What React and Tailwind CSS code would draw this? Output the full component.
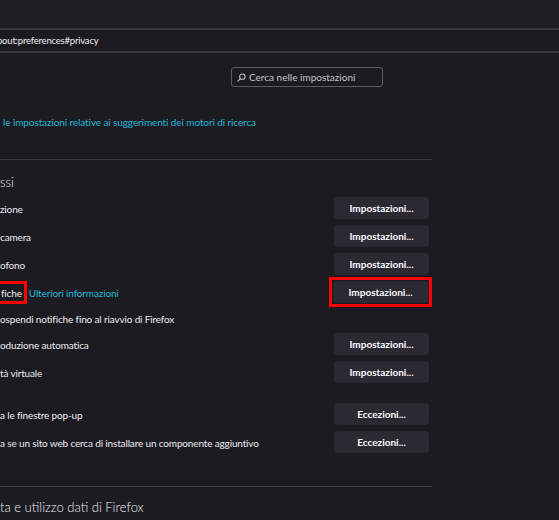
import React from 'react';

const SearchIcon = () => (
  <svg width="9" height="9" viewBox="0 0 16 16" fill="none" stroke="#c8c8cf" strokeWidth="1.8">
    <circle cx="9.5" cy="6.5" r="4.8" />
    <path d="M6.2 9.8 1.5 14.5" strokeLinecap="round" />
  </svg>
);

const PrefButton = ({ label }) => (
  <button className="w-[95px] h-[22px] rounded-[4px] bg-[#2b2a33] text-[10px] font-bold text-[#fbfbfe] flex items-center justify-center">
    {label}
  </button>
);

const Row = ({ children, button, className = 'h-[28px]' }) => (
  <div className={`flex items-center justify-between pr-[3px] ${className}`}>
    <div className="flex items-center pt-[2px] text-[10px] tracking-[-0.15px] text-[#ececf0]">{children}</div>
    {button && <PrefButton label={button} />}
  </div>
);

const App = () => {
  return (
    <div
      className="w-[559px] h-[520px] overflow-hidden bg-[#1c1b22] text-[#fbfbfe]"
      style={{ fontFamily: 'Lato, "Noto Sans", sans-serif' }}
    >
      {/* barra indirizzi */}
      <div className="h-[28px] bg-[#1e1d24]" />
      <div className="h-[25px] border-y-2 border-[#38373f] bg-[#1b1a21] flex items-center">
        <span className="pt-[2px] text-[9.5px] tracking-[-0.2px] text-[#ececf0] -ml-[3px]">bout:preferences#privacy</span>
      </div>

      {/* contenuto */}
      <div className="w-[432px]">
        <div className="mt-[14px] ml-[231px] w-[152px] h-[20px] rounded-[3px] border border-[#5b5a63] flex items-center gap-[3px] pl-[5px]">
          <SearchIcon />
          <span className="text-[10px] text-[#c4c4cc]">Cerca nelle impostazioni</span>
        </div>

        <div className="mt-[27px] pl-[3px] text-[10px] tracking-[-0.1px] text-[#22b8d8] leading-[16px]">
          le impostazioni relative ai suggerimenti dei motori di ricerca
        </div>

        <div className="mt-[29px] h-px bg-[#3a3944]" />

        <div className="mt-[11px] h-[23px] flex items-center text-[13px] font-light text-[#ececf0]">ssi</div>

        <Row button="Impostazioni...">zione</Row>
        <Row button="Impostazioni...">camera</Row>
        <Row button="Impostazioni...">ofono</Row>
        <div className="flex items-center justify-between h-[28px]">
          <div className="flex items-center text-[10px] tracking-[-0.15px] text-[#ececf0]">
            <span className="h-[23px] flex items-center pt-[2px] border-[3px] border-l-0 border-[#ff0000] pl-[1px] pr-[2px]">fiche</span>
            <span className="ml-[2px] pt-[2px] text-[#22b8d8]">Ulteriori informazioni</span>
          </div>
          <div className="border-[3px] border-[#ff0000] p-[1px]">
            <PrefButton label="Impostazioni..." />
          </div>
        </div>
        <Row className="h-[24px]">ospendi notifiche fino al riavvio di Firefox</Row>
        <Row button="Impostazioni...">oduzione automatica</Row>
        <Row button="Impostazioni...">tà virtuale</Row>

        <div className="h-[14px]" />
        <Row button="Eccezioni...">a le finestre pop-up</Row>
        <Row button="Eccezioni...">a se un sito web cerca di installare un componente aggiuntivo</Row>

        <div className="mt-[30px] h-px bg-[#3a3944]" />
        <div className="mt-[11px] text-[13px] font-light text-[#ececf0]">ta e utilizzo dati di Firefox</div>
      </div>
    </div>
  );
};

export default App;
